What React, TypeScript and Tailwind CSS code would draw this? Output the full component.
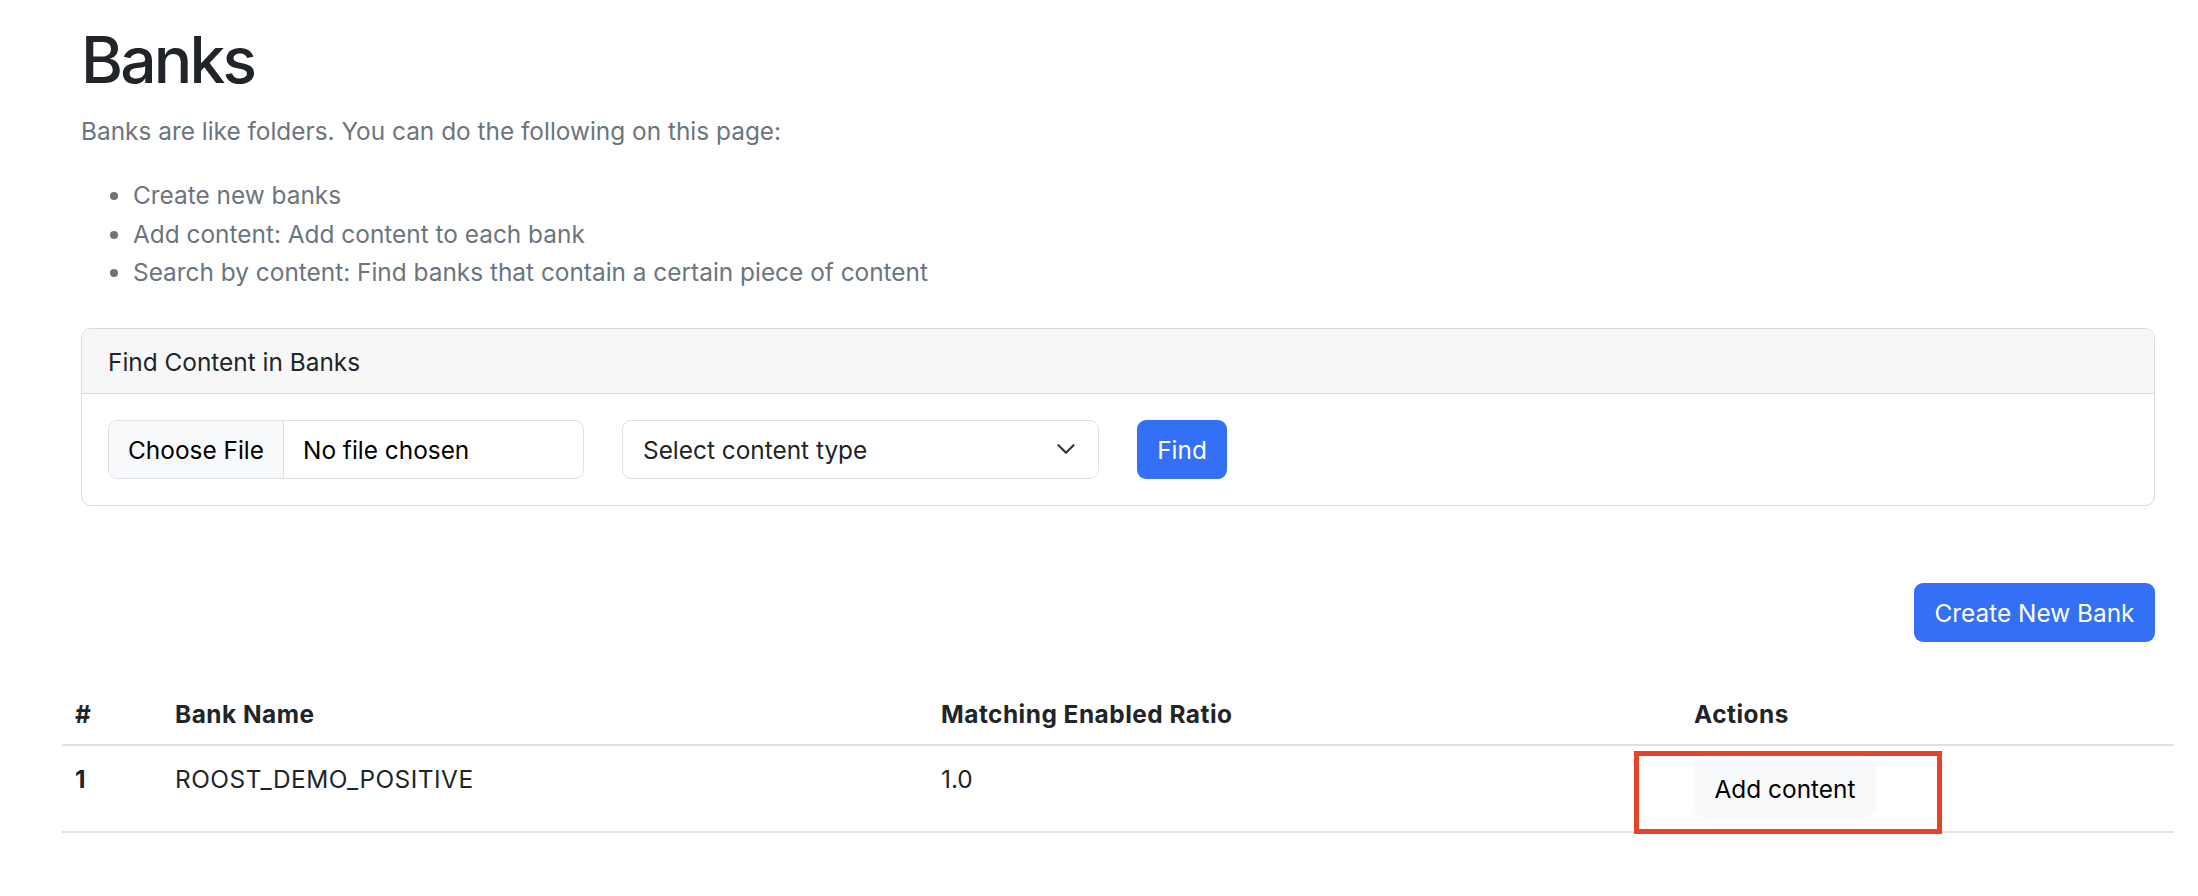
const BULLETS = [
  "Create new banks",
  "Add content: Add content to each bank",
  "Search by content: Find banks that contain a certain piece of content",
];

const App = () => {
  return (
    <div className="min-h-[896px] bg-white pl-[62px] pr-[24px] font-['Inter',sans-serif] text-[24.4px] leading-[38px] text-[#212529] overflow-hidden">
      <div className="px-[19px] pt-[22px]">
        <h1 className="h-[76px] text-[64px] leading-[76px] font-medium tracking-[-2.8px] mb-[14px]">Banks</h1>
        <p className="text-[#6c757d] mb-[26px]">Banks are like folders. You can do the following on this page:</p>
        <ul className="list-disc pl-[52px] text-[#6c757d] mb-[36px]">
          {BULLETS.map((item) => (
            <li key={item} className="h-[38.5px] leading-[38.5px]">{item}</li>
          ))}
        </ul>

        {/* Find content card */}
        <div className="border border-[#d9dadb] rounded-[10px] overflow-hidden">
          <div className="h-[65px] bg-[#f7f7f7] border-b border-[#d9dadb] px-[26px] pt-[2px] flex items-center">Find Content in Banks</div>
          <div className="flex items-start px-[26px] pt-[26px] pb-[26px] gap-[38px]">
            <div className="flex w-[476px] h-[59px] border border-[#dee2e6] rounded-[9px] overflow-hidden">
              <div className="w-[175px] bg-[#f8f9fa] border-r border-[#dee2e6] pt-[2px] flex items-center justify-center text-black">Choose File</div>
              <div className="flex items-center pl-[19px] pt-[2px] text-black">No file chosen</div>
            </div>
            <div className="flex items-center justify-between w-[477px] h-[59px] border border-[#dee2e6] rounded-[9px] pl-[20px] pr-[22px]">
              <span className="pt-[2px]">Select content type</span>
              <svg viewBox="0 0 16 16" className="w-[20px] h-[20px]" fill="none" stroke="#343a40" strokeWidth="1.8" strokeLinecap="round" strokeLinejoin="round">
                <path d="m2 5 6 6 6-6" />
              </svg>
            </div>
            <button className="w-[90px] h-[59px] bg-[#3470f5] rounded-[9px] pt-[2px] text-white">Find</button>
          </div>
        </div>

        <div className="flex justify-end mt-[77px] mb-[43px]">
          <button className="w-[241px] h-[59px] bg-[#3470f5] rounded-[9px] pt-[2px] text-white">Create New Bank</button>
        </div>
      </div>

      {/* Banks table */}
      <div className="relative">
        <table className="w-full table-fixed border-collapse">
          <thead>
            <tr className="h-[60px] border-b-[2px] border-[#dee2e6] text-left tracking-[0.5px]">
              <th className="w-[113px] pl-[13px] font-bold">#</th>
              <th className="w-[766px] font-bold">Bank Name</th>
              <th className="w-[753px] font-bold">Matching Enabled Ratio</th>
              <th className="font-bold">Actions</th>
            </tr>
          </thead>
          <tbody>
            <tr className="border-b-[2px] border-[#e3e5e8] align-top">
              <td className="pl-[13px] pt-[14px] font-bold">1</td>
              <td className="pt-[14px] tracking-[0.5px]">ROOST_DEMO_POSITIVE</td>
              <td className="pt-[14px]">1.0</td>
              <td className="pt-[13px] pb-[14px]">
                <button className="w-[182px] h-[58px] bg-[#f8f9fa] rounded-[9px] pt-[2px] text-black">Add content</button>
              </td>
            </tr>
          </tbody>
        </table>
        {/* red highlight annotation */}
        <div className="absolute left-[1572px] top-[66px] w-[308px] h-[83px] border-[5px] border-[#e6432a]" />
      </div>
    </div>
  );
};

export default App;
